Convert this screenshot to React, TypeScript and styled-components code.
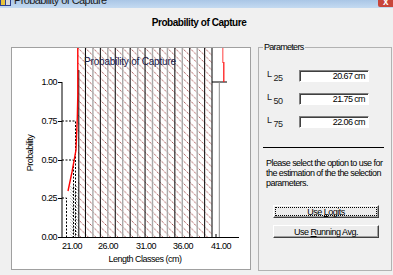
import React from 'react';
import styled, { createGlobalStyle, css } from 'styled-components';

const GlobalStyle = createGlobalStyle`
  html, body {
    margin: 0;
    padding: 0;
    background: #f0f0f0;
  }
  body {
    font-family: "Liberation Sans", Arial, sans-serif;
  }
`;

const params = [
    { sub: '25', value: '20.67 cm' },
    { sub: '50', value: '21.75 cm' },
    { sub: '75', value: '22.06 cm' },
];

const BAR_START = 78;
const BAR_W = 7.45;

function Chart() {
    const bars = Array.from({ length: 17 }, (_, i) => i + 1);
    const yTicks = [
        { y: 82, label: '1.00' },
        { y: 121, label: '0.75' },
        { y: 160, label: '0.50' },
        { y: 198, label: '0.25' },
        { y: 237, label: '0.00' },
    ];
    const xTicks = [
        { x: 72, label: '21.00' },
        { x: 108, label: '26.00' },
        { x: 146, label: '31.00' },
        { x: 183, label: '36.00' },
        { x: 221, label: '41.00' },
    ];
    return (
        <svg width="238" height="221" viewBox="12 48 238 221" style={{ display: 'block' }}>
            <defs>
                <pattern id="hatch" x={BAR_START} y="48" width={BAR_W} height={BAR_W} patternUnits="userSpaceOnUse">
                    <path d={`M-1,-1 L${BAR_W + 1},${BAR_W + 1}`} stroke="#8a1c1c" strokeWidth="0.9" strokeDasharray="1.1 0.9" />
                </pattern>
                <pattern id="hatchDense" x="70" y="48" width="3" height="3" patternUnits="userSpaceOnUse">
                    <path d="M-1,-1 L4,4" stroke="#333" strokeWidth="0.8" strokeDasharray="1 1" />
                </pattern>
            </defs>

            {/* bars */}
            <rect x="70.5" y="186" width={BAR_START - 70.5} height="51" fill="url(#hatchDense)" />
            <rect x={BAR_START} y="48" width={212 - BAR_START} height="189" fill="url(#hatch)" />
            {bars.map((i) => (
                <line
                    key={i}
                    x1={BAR_START + i * BAR_W}
                    x2={BAR_START + i * BAR_W}
                    y1="48"
                    y2="237"
                    stroke={i % 2 ? '#000' : '#a8a8a8'}
                    strokeWidth={i % 2 ? 1 : 1.4}
                />
            ))}
            <line x1="78.8" x2="78.8" y1="70" y2="237" stroke="#000" />
            <line x1="212" x2="212" y1="48" y2="237" stroke="#000" />

            {/* right end */}
            <line x1="212" x2="227" y1="82" y2="82" stroke="#000" />
            <line x1="219.3" x2="219.3" y1="82" y2="237" stroke="#8a8a8a" />
            <line x1="222.8" x2="222.8" y1="48" y2="63" stroke="#ff6060" strokeWidth="1.2" />
            <line x1="223.8" x2="223.8" y1="62" y2="82" stroke="#ff1a1a" strokeWidth="1.3" />

            {/* reference lines */}
            <g stroke="#000" strokeDasharray="2 1.5" fill="none">
                <polyline points="62,121 75.5,121 75.5,237" />
                <polyline points="62,160 73.5,160 73.5,237" />
                <polyline points="62,198 66.5,198 66.5,237" />
            </g>

            {/* fitted curve */}
            <polyline points="68,191 72,172 76,150 77.3,118 77.8,95 77.8,48" stroke="#ff0000" strokeWidth="1.4" fill="none" />

            {/* axes */}
            <line x1="62" x2="62" y1="82" y2="237.5" stroke="#000" />
            <line x1="61.5" x2="239" y1="237.5" y2="237.5" stroke="#000" />
            <line x1="216" x2="216" y1="234" y2="237" stroke="#000" />
            {yTicks.map((t) => (
                <g key={t.label}>
                    <line x1="58" x2="62" y1={t.y + 0.5} y2={t.y + 0.5} stroke="#000" />
                    <text x="57" y={t.y + 3} textAnchor="end" fontSize="9" letterSpacing="-0.5">{t.label}</text>
                </g>
            ))}
            {xTicks.map((t) => (
                <text key={t.label} x={t.x} y="249" textAnchor="middle" fontSize="9" letterSpacing="-0.5">{t.label}</text>
            ))}
            <text x="145" y="262" textAnchor="middle" fontSize="9" letterSpacing="-0.5">Length Classes (cm)</text>
            <text x="33" y="153" textAnchor="middle" fontSize="9" letterSpacing="-0.5" transform="rotate(-90 33 153)">Probability</text>
            <text x="130" y="65" textAnchor="middle" fontSize="10" letterSpacing="-0.2" fill="#20204a">Probability of Capture</text>
        </svg>
    );
}

function App() {
    return (
        <>
            <GlobalStyle />
            <Window>
                <TitleBar>
                    <AppIcon width="11" height="8" viewBox="0 0 11 8">
                        <rect x="0" y="0" width="11" height="8" fill="#2b3f8f" />
                        <rect x="1" y="1" width="4" height="6" fill="#e8c33a" />
                        <rect x="6" y="2" width="4" height="5" fill="#d9d9d9" />
                    </AppIcon>
                    <Caption>Probability of Capture</Caption>
                    <CloseButton>x</CloseButton>
                </TitleBar>

                <Heading>Probability of Capture</Heading>

                <Main>
                    <ChartPanel>
                        <Chart />
                    </ChartPanel>

                    <GroupBox>
                        <Legend>Parameters</Legend>
                        <Rows>
                            {params.map((p) => (
                                <ParamRow key={p.sub}>
                                    <ParamLabel>
                                        L<Sub>{p.sub}</Sub>
                                    </ParamLabel>
                                    <TextBox>{p.value}</TextBox>
                                </ParamRow>
                            ))}
                        </Rows>
                        <Separator />
                        <Note>
                            Please select the option to use for<br />
                            the estimation of the the selection<br />
                            parameters.
                        </Note>
                        <Buttons>
                            <Button $focused>Use <u>L</u>ogits</Button>
                            <Button>Use <u>R</u>unning Avg.</Button>
                        </Buttons>
                    </GroupBox>
                </Main>
            </Window>
        </>
    );
}

export default App;

const Window = styled.div`
    width: 393px;
    height: 275px;
    overflow: hidden;
    background: #f0f0f0;
    display: flex;
    flex-direction: column;
    color: #000;
    font-size: 9px;
    letter-spacing: -0.55px;
`
const TitleBar = styled.div`
    flex: none;
    height: 8px;
    overflow: hidden;
    display: flex;
    align-items: flex-start;
    background: linear-gradient(#aac6e6, #c4daf1);
`
const AppIcon = styled.svg`
    flex: none;
    display: block;
    margin-top: -2px;
`
const Caption = styled.span`
    margin: -6px 0 0 3px;
    font-size: 11px;
    line-height: 12px;
    letter-spacing: -0.6px;
    color: #1b1b1b;
`
const CloseButton = styled.span`
    margin-left: auto;
    width: 15px;
    height: 7px;
    background: #c8453a;
    border-radius: 0 0 0 2px;
    color: #fff;
    font-weight: bold;
    font-size: 10px;
    line-height: 4px;
    text-align: center;
    overflow: hidden;
`
const Heading = styled.h1`
    margin: 9px 0 0;
    padding-left: 5px;
    height: 12px;
    line-height: 12px;
    text-align: center;
    font-size: 10px;
    font-weight: bold;
    letter-spacing: -0.45px;
`
const Main = styled.div`
    display: flex;
    align-items: flex-start;
    margin-top: 18px;
    padding-left: 11px;
`
const ChartPanel = styled.div`
    flex: none;
    width: 240px;
    height: 223px;
    box-sizing: border-box;
    border: 1px solid #a0a0a0;
    background: #fff;
`
const GroupBox = styled.fieldset`
    flex: none;
    margin: -5px 0 0 7px;
    padding: 0;
    width: 134px;
    height: 229px;
    box-sizing: border-box;
    border: 1px solid #b2b2b2;
    min-width: 0;
`
const Legend = styled.legend`
    margin-left: 4px;
    padding: 0 1px;
    font-size: 9px;
    line-height: 10px;
    letter-spacing: -0.7px;
`
const Rows = styled.div`
    display: flex;
    flex-direction: column;
    gap: 11px;
    margin: 18px 0 0 8px;
`
const ParamRow = styled.div`
    display: flex;
    align-items: flex-start;
    height: 12px;
`
const ParamLabel = styled.div`
    width: 32px;
    display: flex;
    align-items: flex-start;
    font-size: 9px;
    line-height: 8px;
    color: #222;
`
const Sub = styled.span`
    margin: 4px 0 0 2px;
    font-size: 9px;
`
const TextBox = styled.div`
    width: 70px;
    height: 12px;
    box-sizing: border-box;
    border: 1px solid;
    border-color: #808080 #fff #fff #808080;
    box-shadow: inset 1px 1px #404040;
    background: #fff;
    text-align: right;
    padding-right: 3px;
    font-size: 9px;
    line-height: 10px;
    letter-spacing: -0.6px;
`
const Separator = styled.div`
    margin: 19px 0 0 4px;
    width: 121px;
    height: 1px;
    background: #000;
`
const Note = styled.p`
    margin: 10px 0 0 7px;
    font-size: 9px;
    line-height: 10px;
    white-space: nowrap;
`
const Buttons = styled.div`
    display: flex;
    flex-direction: column;
    gap: 7px;
    margin: 17px 0 0 14px;
`
const Button = styled.button<{ $focused?: boolean }>`
    width: 106px;
    height: 13px;
    margin: 0;
    padding: 0;
    box-sizing: border-box;
    background: #ececec;
    color: #000;
    font-family: inherit;
    font-size: 9px;
    line-height: 10px;
    letter-spacing: -0.5px;
    border: 1px solid;
    border-color: #fff #404040 #404040 #fff;
    box-shadow: inset -1px -1px #a0a0a0;
    ${(p) => p.$focused && css`
        outline: 1px dotted #000;
        outline-offset: -3px;
    `}
`
